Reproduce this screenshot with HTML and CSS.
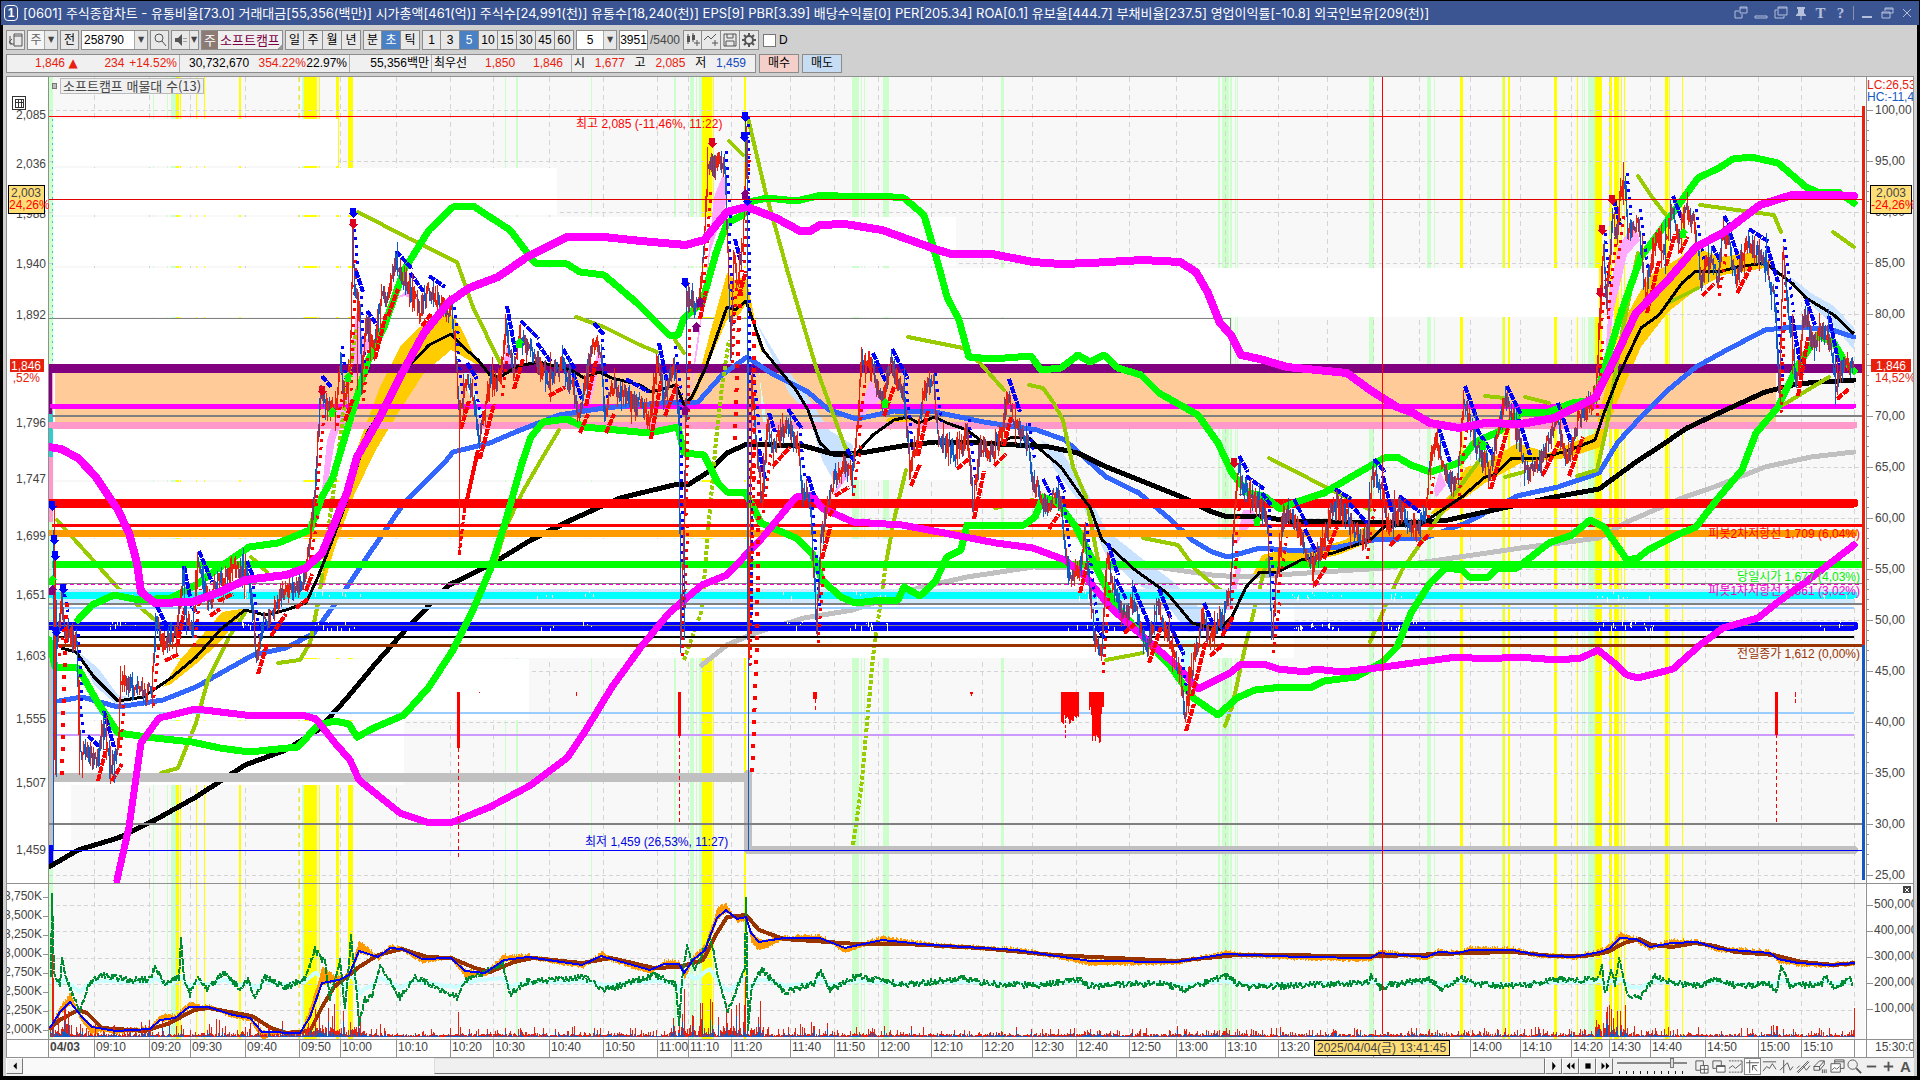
FILE: index.html
```html
<!DOCTYPE html>
<html lang="ko">

<head>
    <meta charset="UTF-8">
    <meta name="viewport" content="width=device-width, initial-scale=1.0">
    <title>[0601] 주식종합차트</title>
    <link rel="stylesheet" href="styles.css">
</head>

<body>
    <header class="titlebar">
        <span class="window-no">1</span>
        <h1>[0601] 주식종합차트 - 유통비율[73.0] 거래대금[55,356(백만)] 시가총액[461(억)] 주식수[24,991(천)] 유통수[18,240(천)] EPS[9] PBR[3.39] 배당수익률[0] PER[205.34] ROA[0.1] 유보율[444.7] 부채비율[237.5] 영업이익률[-10.8] 외국인보유[209(천)]</h1>
        <div class="window-buttons">
            <button aria-label="분리"><svg viewBox="0 0 14 14"><path d="M6 1h7v6H6zM6 2h7M5 5H1v7h7V8" /></svg></button>
            <button aria-label="숨김"><svg viewBox="0 0 14 14"><path d="M1 10h12v2H1z" /></svg></button>
            <button aria-label="복제"><svg viewBox="0 0 14 14"><path d="M4 1h9v8H4zM4 2h9M3 4H1v8h9v-2" /></svg></button>
            <button aria-label="고정"><svg viewBox="0 0 14 14"><path class="solid" d="M3 1h8v2h-1v4l2 2v1H2V9l2-2V3H3z" /><path d="M7 10v4" /></svg></button>
            <button class="glyph">T</button>
            <button class="glyph">?</button>
            <i class="divider"></i>
            <button aria-label="최소화"><svg viewBox="0 0 14 14"><path class="solid" d="M2 10h10v2H2z" /></svg></button>
            <button aria-label="복원"><svg viewBox="0 0 14 14"><path d="M5 2h8v5h-3M5 3h8M5 2v3M2 6h8v6H2zM2 7h8" /></svg></button>
            <button aria-label="닫기"><svg viewBox="0 0 14 14"><path d="M3 3l8 8M11 3l-8 8" /></svg></button>
        </div>
    </header>

    <main class="workspace">
        <div class="toolbar">
            <button class="tool" aria-label="목록"><svg viewBox="0 0 16 16"><path d="M6 2h8v12H6zM6 4h8M2 4v8M2 12h4M4 7l-3 3 3 2" /></svg></button>
            <div class="combo">
                <button class="tool light">주</button><button class="tool arrow" aria-label="종류">▼</button>
            </div>
            <button class="tool">전</button>
            <div class="combo">
                <input class="code" type="text" value="258790" aria-label="종목코드"><button class="tool arrow" aria-label="최근 종목">▼</button>
            </div>
            <button class="tool" aria-label="검색"><svg viewBox="0 0 16 16"><circle cx="7" cy="6" r="4" /><path d="M10 9l4 5" /></svg></button>
            <div class="combo">
                <button class="tool narrow" aria-label="소리"><svg viewBox="0 0 16 16"><path class="solid" d="M2 6h3l4-4v12l-4-4H2z" /><path d="M11 6v1M13 6v1M11 9v1M13 9v1" /></svg></button><button class="tool arrow thin" aria-label="소리 설정">▼</button>
            </div>
            <div class="stock"><b>주</b><span>소프트캠프</span></div>
            <div class="group">
                <button class="tool">일</button><button class="tool">주</button><button class="tool">월</button><button class="tool">년</button>
            </div>
            <div class="group">
                <button class="tool">분</button><button class="tool active">초</button><button class="tool">틱</button>
            </div>
            <div class="group">
                <button class="tool">1</button><button class="tool">3</button><button class="tool active">5</button><button class="tool">10</button><button class="tool">15</button><button class="tool">30</button><button class="tool">45</button><button class="tool">60</button>
            </div>
            <div class="combo">
                <input class="unit" type="text" value="5" aria-label="주기"><button class="tool arrow" aria-label="주기 선택">▼</button>
            </div>
            <input class="count" type="text" value="3951" aria-label="봉 개수">
            <span class="total">/5400</span>
            <div class="group">
                <button class="tool" aria-label="봉 추가"><svg viewBox="0 0 16 16"><path class="solid" d="M2 4h3v6H2zM7 3h3v5H7z" /><path d="M3 2v10M8 1v9M12 8v6M9 11h6" /></svg></button><button class="tool" aria-label="지표 추가"><svg viewBox="0 0 16 16"><path d="M1 8l4-4 3 3 5-5M12 8v6M9 11h6" /></svg></button><button class="tool" aria-label="저장"><svg viewBox="0 0 16 16"><path d="M2 2h12v12H2zM5 2v4h6V2M4 14V9h8v5" /></svg></button><button class="tool" aria-label="설정"><svg viewBox="0 0 16 16"><circle class="gear" cx="8" cy="8" r="4" /><path class="teeth" d="M8 1v3M8 12v3M1 8h3M12 8h3M3 3l2 2M11 11l2 2M13 3l-2 2M5 11l-2 2" /></svg></button>
            </div>
            <label class="check"><input type="checkbox">D</label>
        </div>

        <div class="quotebar">
            <div class="quotes">
                <div class="cell c1 up"><span>1,846 <b>▲</b></span><span>234</span><span>+14.52%</span></div>
                <div class="cell c2"><span>30,732,670</span><span class="up">354.22%</span><span>22.97%</span></div>
                <div class="cell c3"><span>55,356백만</span></div>
                <div class="cell c4"><span>최우선</span><span class="up">1,850</span><span class="up">1,846</span></div>
                <div class="cell c5"><span>시</span><span class="up">1,677</span><span>고</span><span class="up">2,085</span><span>저</span><span class="down">1,459</span></div>
            </div>
            <button class="order buy">매수</button>
            <button class="order sell">매도</button>
        </div>

        <section class="chart">
            <svg class="axis" id="priceAxis" viewBox="7 77 42 806" preserveAspectRatio="none"></svg>
            <div class="plot">
                <svg id="pricePlot" viewBox="49 77 1816 806" preserveAspectRatio="none"></svg>
                <div class="legend"><i></i><span>소프트캠프 매물대 수(13)</span></div>
            </div>
            <svg class="axis" id="rateAxis" viewBox="1865 77 48 806" preserveAspectRatio="none"></svg>

            <svg class="axis lower" id="volumeAxis" viewBox="7 884 42 155" preserveAspectRatio="none"></svg>
            <svg class="plot lower" id="volumePlot" viewBox="49 884 1816 155" preserveAspectRatio="none"></svg>
            <svg class="axis lower" id="amountAxis" viewBox="1865 884 48 155" preserveAspectRatio="none"></svg>

            <svg class="time" id="timeAxis" viewBox="7 1040 1906 17" preserveAspectRatio="none"></svg>
        </section>

        <footer class="bottombar">
            <button class="step" aria-label="왼쪽"><svg viewBox="0 0 16 16"><path class="solid" d="M10 4v8L6 8z" /></svg></button>
            <div class="track"><div class="thumb"></div></div>
            <button class="step" aria-label="재생"><svg viewBox="0 0 16 16"><path class="solid" d="M6 3v10l4-5z" /></svg></button>
            <button class="step" aria-label="뒤로"><svg viewBox="0 0 16 16"><path class="solid" d="M7 4v8L3 8zM12 4v8L8 8z" /></svg></button>
            <button class="step" aria-label="정지"><svg viewBox="0 0 16 16"><path class="solid" d="M5 5h6v6H5z" /></svg></button>
            <button class="step" aria-label="앞으로"><svg viewBox="0 0 16 16"><path class="solid" d="M4 4v8l4-4zM9 4v8l4-4z" /></svg></button>
            <input class="speed" type="range" min="0" max="10" value="8" aria-label="속도">
            <div class="icons">
                <button aria-label="창 추가"><svg viewBox="0 0 16 16"><path d="M2 2h8v10H2z" /><path class="white" d="M7 7h8v8H7z" /><path d="M11 7v8M7 11h8" /></svg></button>
                <button aria-label="창 복사"><svg viewBox="0 0 16 16"><path d="M2 2h9v8H2z" /><path class="white" d="M6 7h9v7H6z" /><path d="M6 8h9" /></svg></button>
                <button aria-label="추세 영역"><svg viewBox="0 0 16 16"><path stroke-dasharray="2 1" d="M1 2h14M1 14h14" /><path d="M1 10l4-3 3 3 6-5M15 2v12" /></svg></button>
                <button class="pressed" aria-label="십자선"><svg viewBox="0 0 16 16"><path d="M1 4h14M5 1v14M8 7l5 6M8 12V7h5" /></svg></button>
                <button aria-label="수평선"><svg viewBox="0 0 16 16"><path d="M1 3h14M1 13l4-5 3 2 3-5 4 6" /></svg></button>
                <button aria-label="수직선"><svg viewBox="0 0 16 16"><path d="M5 1v14M1 12l4-4 4-4 3 8 3-4" /></svg></button>
                <button aria-label="추세선"><svg viewBox="0 0 16 16"><path d="M1 14L13 2M2 15L14 3M8 8l3 4 4-5M1 10l3-3" /></svg></button>
                <button aria-label="지우기"><svg viewBox="0 0 16 16"><path d="M1 8l6-6h5l-5 6zM1 8v4h6V8M7 12l5-6V2M10 11v4M12 11v4M14 11v4" /></svg></button>
                <button aria-label="겹치기"><svg viewBox="0 0 16 16"><path d="M5 1h10v9H5zM5 3h10" /><path class="white" d="M1 5h10v9H1z" /><path d="M2 12l3-3 2 2 3-3" /></svg></button>
                <button aria-label="확대경"><svg viewBox="0 0 16 16"><circle cx="6" cy="6" r="5" /><path stroke-width="2" d="M10 10l5 5" /></svg></button>
                <button aria-label="축소"><svg viewBox="0 0 16 16"><path stroke-width="2" d="M3 8h10" /></svg></button>
                <button aria-label="확대"><svg viewBox="0 0 16 16"><path stroke-width="2" d="M3 8h10M8 3v10" /></svg></button>
                <button class="letter">A</button>
            </div>
        </footer>
    </main>

    <script src="chart.js"></script>
</body>

</html>
```
FILE: styles.css
```css
* {
    box-sizing: border-box;
}

body {
    margin: 0;
    padding: 1px 1px 4px;
    height: 100vh;
    display: flex;
    flex-direction: column;
    background: #000;
    color: #000;
    font-family: "Liberation Sans", "Noto Sans CJK KR", sans-serif;
    font-size: 12px;
    overflow: hidden;
}

button,
input {
    font: inherit;
    color: inherit;
    margin: 0;
    padding: 0;
    border: 0;
    background: none;
}

button svg {
    width: 16px;
    height: 16px;
    display: block;
    margin: auto;
    fill: none;
    stroke: #555;
}

svg .solid {
    fill: #555;
    stroke: none;
}

svg .gear,
svg .teeth {
    stroke-width: 2;
}

/* title */
.titlebar {
    flex: none;
    display: flex;
    align-items: center;
    height: 24px;
    padding: 0 5px 0 3px;
    background: #3a5592;
    color: #fff;
}

.window-no {
    width: 14px;
    height: 16px;
    margin-right: 5px;
    border: 1px solid #fff;
    border-radius: 4px;
    font: bold 12px/14px "Liberation Sans", sans-serif;
    text-align: center;
}

.titlebar h1 {
    flex: 1;
    margin: 0;
    font: 13px/20px Inter, "Noto Sans CJK KR", sans-serif;
    white-space: nowrap;
}

.window-buttons {
    display: flex;
    align-items: center;
    gap: 5px;
    color: #b4c0dc;
}

.window-buttons button {
    width: 15px;
    height: 16px;
}

.window-buttons svg {
    width: 14px;
    height: 14px;
    stroke: #b4c0dc;
}

.window-buttons .solid {
    fill: #b4c0dc;
}

.window-buttons .glyph {
    font: bold 15px/16px "Liberation Serif", serif;
}

.divider {
    width: 1px;
    height: 14px;
    background: #8a93a5;
}

.workspace {
    flex: 1;
    min-height: 0;
    margin: 0 2px;
    display: flex;
    flex-direction: column;
    background: #d0d0d0;
}

/* toolbar */
.toolbar {
    display: flex;
    align-items: flex-start;
    gap: 2px;
    height: 26px;
    padding: 5px 3px 0;
}

.combo,
.group {
    flex: none;
    display: flex;
    height: 20px;
}

.combo {
    border: 1px solid #8c8c8c;
}

.combo .tool {
    height: 18px;
    border: 0;
}

.combo .tool.arrow {
    border-left: 1px solid #aaa;
}

.group .tool + .tool {
    border-left: 0;
}

.tool {
    flex: none;
    width: 19px;
    height: 20px;
    border: 1px solid #8c8c8c;
    background: #e8e8e8;
    line-height: 18px;
    text-align: center;
}

.tool.narrow {
    width: 17px;
}

.tool.light {
    width: 16px;
    background: #f6f6f6;
    color: #666;
}

.tool.arrow {
    width: 13px;
    font: 8px/18px "DejaVu Sans", sans-serif;
    color: #444;
}

.tool.arrow.thin {
    width: 9px;
}

.tool.active {
    background: #4a80c4;
    color: #fff;
}

.code,
.unit,
.count {
    height: 18px;
    background: #fff;
}

.code {
    width: 52px;
    padding-left: 2px;
}

.unit {
    width: 26px;
    text-align: center;
}

.count {
    width: 29px;
    height: 20px;
    border: 1px solid #8c8c8c;
    text-align: center;
}

.total {
    width: 31px;
    line-height: 20px;
    color: #444;
}

.stock {
    display: flex;
    align-items: center;
    width: 82px;
    height: 20px;
    gap: 2px;
    border: 1px solid #8c8c8c;
    background: linear-gradient(135deg, #efefef 95%, #999 95%);
    color: #7a0045;
    font: 13px/18px "Noto Sans CJK KR", sans-serif;
    white-space: nowrap;
}

.stock b {
    width: 16px;
    height: 18px;
    background: #8c7b74;
    color: #fff;
    font-weight: normal;
    text-align: center;
}

.check {
    display: flex;
    align-items: center;
    gap: 3px;
    height: 20px;
    margin-left: 2px;
}

.check input {
    appearance: none;
    width: 13px;
    height: 13px;
    border: 1px solid #777;
    background: #fff;
}

/* quotes */
.quotebar {
    display: flex;
    gap: 3px;
    padding: 3px 3px;
}

.quotes {
    display: flex;
    width: 750px;
    height: 19px;
    border: 1px solid #8c8c8c;
    background: #f0f0f0;
    line-height: 17px;
}

.cell {
    flex: none;
    display: flex;
    justify-content: space-between;
    padding: 0 2px;
    white-space: nowrap;
}

.cell b {
    font: 12px/17px "DejaVu Sans", sans-serif;
}

.cell + .cell {
    border-left: 1px solid #b0b0b0;
}

.c1 {
    width: 172px;
    padding-left: 28px;
}

.c1 span:nth-child(2) {
    margin-left: 22px;
}

.c2 {
    width: 170px;
    padding-left: 9px;
}

.c2 span:nth-child(2) {
    margin-left: 9px;
}

.c3 {
    width: 82px;
    justify-content: flex-end;
}

.c4 {
    width: 140px;
    padding-right: 8px;
}

.c5 {
    flex: 1;
    padding-right: 9px;
}

.up {
    color: #e8200e;
}

.down {
    color: #1448c0;
}

.order {
    width: 40px;
    height: 19px;
    border: 1px solid #8c8c8c;
    line-height: 17px;
}

.buy {
    background: #f5cfca;
}

.sell {
    background: #c6ddf3;
}

/* chart */
.chart {
    flex: 1;
    min-height: 0;
    margin: 0 3px;
    display: grid;
    grid-template-columns: 42px minmax(0, 1fr) 48px;
    grid-template-rows: minmax(0, 806fr) minmax(0, 156fr) 18px;
    border: 1px solid #909090;
    border-bottom: 0;
    background: #fff;
}

.chart svg {
    display: block;
    width: 100%;
    height: 100%;
    overflow: hidden;
}

.chart svg * {
    shape-rendering: crispEdges;
}

.chart text {
    font-size: 12px;
    fill: #444;
}

.plot {
    position: relative;
    min-width: 0;
    min-height: 0;
    background: #f8f8f8;
}

.chart .lower,
.chart .time {
    border-top: 1px solid #909090;
}

.time {
    grid-column: 1 / -1;
}

.legend {
    position: absolute;
    top: 1px;
    left: 3px;
    display: flex;
    align-items: center;
    gap: 3px;
    font: 13px/14px "Noto Sans CJK KR", sans-serif;
    color: #444;
}

.legend i {
    width: 5px;
    height: 6px;
    border: 1px solid #777;
    background: #bbb;
}

.legend span {
    padding: 0 2px;
    border: 1px solid #bbb;
    background: #f0f0f0;
}

.chart .bold {
    font-weight: bold;
}

.chart .red {
    fill: #f00;
}

.chart .hot {
    fill: #e8200e;
}

.chart .blue {
    fill: #0000e0;
}

.chart .sky {
    fill: #1259c3;
}

.chart .lime {
    fill: #00f000;
}

.chart .pink {
    fill: #f000d0;
}

.chart .brown {
    fill: #993300;
}

.chart .white {
    fill: #fff;
}

/* bottom bar */
.bottombar {
    flex: none;
    display: flex;
    align-items: center;
    height: 19px;
    margin: 0 3px;
    padding-bottom: 2px;
    background: #f0f0f0;
    border-top: 1px solid #909090;
}

.step {
    flex: none;
    width: 17px;
    height: 16px;
    border: 1px solid;
    border-color: #fff #777 #777 #fff;
    background: #f0f0f0;
}

.step .solid {
    fill: #000;
}

.step svg {
    height: 14px;
}

.track {
    flex: 1;
    height: 16px;
    display: flex;
    justify-content: flex-end;
    background: #f9f9f9;
}

.thumb {
    width: 73%;
    border: 1px solid;
    border-color: #ddd #777 #777 #ddd;
    background: #f0f0f0;
}

.speed {
    appearance: none;
    width: 70px;
    height: 16px;
    margin: 0 6px 0 4px;
    background: linear-gradient(#888, #888) 0 4px / 100% 2px no-repeat,
        repeating-linear-gradient(90deg, #222 0 1px, transparent 1px 7px) 2px 13px / 100% 3px no-repeat;
}

.speed::-webkit-slider-thumb {
    appearance: none;
    width: 4px;
    height: 10px;
    margin-bottom: 6px;
    border: 1px solid #777;
    background: #ddd;
}

.icons {
    display: flex;
}

.icons button {
    width: 17px;
    height: 17px;
}

.icons svg {
    width: 15px;
    height: 15px;
}

.icons .pressed {
    background: #fff;
    border: 1px solid #888;
}

.icons svg .white {
    fill: #fff;
}

.icons .letter {
    font: bold 15px/17px "Liberation Sans", sans-serif;
    color: #555;
}
```
FILE: chart.js
```js
var NS = 'http://www.w3.org/2000/svg';

function el(parent, tag, attrs, content) {
    var node = document.createElementNS(NS, tag);
    for (var key in attrs) node.setAttribute(key, attrs[key]);
    if (content) node.textContent = content;
    parent.appendChild(node);
    return node;
}

function rect(p, x, y, w, h, fill) {
    return el(p, 'rect', { x: x, y: y, width: w, height: h, fill: fill });
}

function line(p, points, color, width, dash, cap) {
    return el(p, 'polyline', {
        points: points, fill: 'none', stroke: color, 'stroke-width': width,
        'stroke-linejoin': 'round', 'stroke-linecap': cap || 'butt', 'stroke-dasharray': dash || 'none'
    });
}

function area(p, points, color) {
    return el(p, 'polygon', { points: points, fill: color });
}

function text(p, x, y, str, cls, anchor) {
    return el(p, 'text', { x: x, y: y, 'class': cls || '', 'text-anchor': anchor || 'start' }, str);
}

function pairs(str) {
    return str.trim().split(/\s+/).map(function (s) { return s.split(',').map(Number); });
}

// fixed seed so every load draws the same candles
var seed = 7;
function rnd() {
    seed = (seed * 16807) % 2147483647;
    return seed / 2147483647;
}

function valueAt(pts, x) {
    for (var i = 1; i < pts.length; i++) {
        if (x <= pts[i][0]) {
            var a = pts[i - 1], b = pts[i];
            return a[1] + (b[1] - a[1]) * (x - a[0]) / ((b[0] - a[0]) || 1);
        }
    }
    return pts[pts.length - 1][1];
}

var ticks = [94, 149, 190, 245, 299, 340, 396, 450, 493, 549, 603, 657, 688, 731, 790, 834, 878, 931, 982,
    1032, 1076, 1129, 1176, 1225, 1278, 1327, 1373, 1419, 1470, 1520, 1571, 1609, 1650, 1705, 1758, 1801, 1854];
var tickLabels = ['09:10', '09:20', '09:30', '09:40', '09:50', '10:00', '10:10', '10:20', '10:30', '10:40', '10:50',
    '11:00', '11:10', '11:20', '11:40', '11:50', '12:00', '12:10', '12:20', '12:30', '12:40', '12:50', '13:00',
    '13:10', '13:20', '', '', '', '14:00', '14:10', '14:20', '14:30', '14:40', '14:50', '15:00', '15:10', ''];

// x, width of the signal stripes
var greenBars = '49,4 153,1 167,1 171,5 302,2 505,1 516,2 591,1 674,2 690,4 696,1 699,3 852,7 861,1 864,1 883,6 1001,3 1218,2 1222,7 1230,2 1235,1 1237,1 1369,5 1427,4 1434,1 1502,1 1582,1 1584,1 1588,7';
var yellowBars = '176,3 180,1 196,1 204,1 239,2 304,13 319,1 336,3 348,5 702,10 713,1 744,2 1460,3 1503,2 1508,2 1554,3 1577,1 1595,7 1609,3 1614,5 1621,1 1624,1 1665,3 1669,1 1682,1';

function stripes(p, y, h) {
    pairs(greenBars).forEach(function (b) { rect(p, b[0], y, b[1], h, '#ccffcc'); });
    pairs(yellowBars).forEach(function (b) { rect(p, b[0], y, b[1], h, '#ffff00'); });
    ticks.forEach(function (x) { line(p, x + ',' + y + ' ' + x + ',' + (y + h), '#d4d4d4', 1, '5 4'); });
    line(p, '298,' + y + ' 298,' + (y + h), '#ffff00', 1, '5 4');
}

/* ---------- price plot ---------- */
var P = document.getElementById('pricePlot');
stripes(P, 77, 806);
for (var g = 0; g < 16; g++) line(P, '49,' + (110 + g * 51) + ' 1862,' + (110 + g * 51), '#d4d4d4', 1, '4 3');

// volume profile: top, bottom, right edge
[[119, 166, 338], [168, 215, 557], [217, 266, 956], [268, 317, 1599], [318, 365, 1230], [365, 422, 1230], [424, 480, 985],
    [482, 538, 841], [539, 596, 1341], [597, 658, 1294], [659, 720, 529], [721, 785, 404], [785, 851, 71]].forEach(function (r) {
    rect(P, 54, r[0], r[2] - 54, r[1] - r[0], '#ffffff');
});
line(P, '49,318 1230,318 1230,365', '#808080', 1);

rect(P, 55, 373, 1721, 49, '#ffcc99');
rect(P, 49, 372, 4, 150, '#ff99cc');
rect(P, 49, 411, 4, 46, '#33cccc');
rect(P, 49, 364, 3, 50, '#800080');
rect(P, 49, 640, 5, 225, '#c0c0c0');
rect(P, 49, 845, 4, 22, '#0000ff');
line(P, '52,119 52,365', '#33cccc', 1, '2 4');

// y, width, colour, round end
var bands = [[368, 9, '#800080'], [425, 7, '#ff99cc', 1], [406, 5, '#ff00ff', 1]];
function drawBand(b) {
    line(P, '52,' + b[0] + ' ' + (b[3] ? 1854 : 1862) + ',' + b[0], b[2], b[1], '', b[3] ? 'round' : 'butt');
}

// moving average clouds
area(P, '76,650 98,668 118,695 135,698 118,706 94,685', '#c8e2ff');
area(P, '755,320 780,362 800,385 815,408 829,430 853,445 850,470 833,480 822,460 808,413 790,395', '#c8e2ff');
area(P, '1041,440 1061,450 1086,490 1106,530 1140,557 1171,580 1200,608 1212,630 1188,632 1163,600 1131,580 1106,555 1082,505 1055,470', '#c8e2ff');
area(P, '1788,275 1811,293 1834,306 1854,328 1854,350 1834,326 1806,300', '#c8e2ff');
area(P, '163,687 180,660 204,633 222,612 247,608 220,642 196,664 171,684', '#ffcc00');
area(P, '322,575 331,527 345,498 359,443 380,387 400,347 416,330 433,317 449,311 461,328 473,353 494,382 478,365 451,350 424,373 400,410 376,450 355,493 335,547 324,585', '#ffcc00');
area(P, '692,403 710,333 727,273 735,280 746,277 755,320 763,357 746,304 739,315 727,320 714,350 702,380', '#ffcc00');
area(P, '886,420 902,410 912,420 890,430', '#ffcc00');
area(P, '1250,580 1262,555 1290,548 1310,550 1345,540 1375,520 1375,540 1338,555 1301,563 1265,577', '#ffcc00');
area(P, '1430,513 1452,493 1466,467 1485,463 1517,443 1549,453 1595,433 1610,370 1624,320 1641,290 1654,272 1668,265 1696,247 1719,257 1750,253 1772,262 1765,268 1723,275 1696,290 1668,312 1641,347 1618,400 1600,447 1567,458 1521,463 1485,483 1462,500 1439,517', '#ffcc00');
['322,490 327,440 339,407 347,387 351,400 335,440 326,495', '351,347 357,310 363,337 375,343 367,350 355,380',
    '688,407 696,347 706,280 714,197 724,172 727,200 710,253 698,347', '857,425 863,400 871,378 880,400 868,410',
    '1604,373 1610,290 1618,247 1634,223 1640,240 1627,255 1613,313 1607,367', '500,380 508,340 512,370',
    '833,495 845,470 853,470 838,490', '1236,545 1243,510 1253,510 1258,520 1246,530',
    '1434,490 1440,470 1446,485 1436,498', '1226,610 1238,560 1242,565 1232,610', '394,300 408,290 418,300 404,296',
    '586,400 598,350 601,360 590,405'].forEach(function (a) {
    area(P, a, '#ffaaff');
});
['755,310 764,440 771,450 760,380', '461,375 480,420 486,410 478,400 468,372', '1093,620 1101,630 1106,580 1098,600',
    '816,560 822,530 826,540 819,585', '1180,640 1186,690 1192,665 1198,640'].forEach(function (a) {
    area(P, a, '#ccffff');
});

bands.forEach(drawBand);
line(P, '52,416 1862,416', '#808080', 2);

// slow averages
line(P, '702,665 727,645 755,633 804,618 853,610 918,588 967,577 1033,567 1163,568 1212,575 1240,577 1292,574 1384,568 1439,560 1521,548 1599,538 1627,522 1682,498 1714,487 1765,467 1811,457 1854,452', '#c0c0c0', 5, '', 'round');
line(P, '59,701 82,697 118,707 163,700 196,687 253,655 286,648 314,633 347,587 367,557 404,503 445,462 453,452 490,443 518,431 559,415 604,408 661,403 698,402 722,375 747,357 771,373 808,392 829,410 857,419 894,411 935,412 984,422 1037,430 1065,440 1106,477 1139,493 1171,520 1192,540 1212,552 1228,557 1260,548 1301,551 1338,547 1374,540 1425,538 1466,523 1517,496 1558,487 1599,473 1618,442 1641,417 1668,390 1696,367 1723,352 1765,330 1792,327 1829,329 1854,337', '#3366ff', 5, '', 'round');
line(P, '49,867 78,850 118,838 155,820 196,797 245,765 286,750 318,730 347,698 376,663 408,627 449,585 490,565 531,540 571,520 620,498 678,484 688,485 708,472 727,453 747,444 804,446 833,454 861,453 902,446 935,442 984,443 1049,447 1078,453 1102,465 1184,498 1212,512 1228,517 1260,516 1287,521 1333,522 1420,522 1448,520 1494,510 1549,498 1599,489 1636,462 1659,447 1687,428 1719,413 1765,392 1797,384 1820,382 1854,380', '#000', 5, '', 'round');

// parabolic trails
['358,212 408,238 457,262 473,307 500,363', '576,317 604,327 640,345 657,352', '57,520 118,588 155,620',
    '161,773 178,768 196,723 208,680 229,637 245,613', '251,557 267,572', '278,663 300,660 310,643 318,603 322,577',
    '496,560 506,527 522,493 541,460 559,430', '729,141 743,155', '748,118 765,190 788,273 816,367 845,447 853,457',
    '675,340 684,353', '908,337 963,348 980,363 1004,390', '1029,385 1043,388 1053,402 1063,420 1073,467 1086,497 1098,560',
    '1143,538 1178,545 1196,570 1224,593', '1106,660 1143,653', '1225,726 1232,707 1246,643 1260,587 1267,560',
    '1269,458 1347,498 1370,510', '1370,642 1388,600 1402,570 1425,537 1450,500 1485,453', '1485,396 1505,398',
    '1525,397 1549,403', '1505,477 1524,472', '1577,476 1597,470 1606,430 1622,333 1638,253', '1638,176 1652,197 1666,215',
    '1700,205 1774,215 1781,232', '1833,232 1854,247', '1668,303 1698,288', '1783,405 1829,377',
    '886,563 894,520 906,470', '995,508 1033,500'].forEach(function (s) {
    line(P, s, '#99cc00', 4, '', 'round');
});
['684,660 702,610 707,543 712,487 716,440 722,387 729,340', '853,845 861,790 873,657 886,563', '322,577 335,480 345,400 357,327'].forEach(function (s) {
    line(P, s, '#99cc00', 4, '4 2');
});

// horizontal levels
line(P, '49,116 1862,116', '#ff0000', 1);
[[503, 9, '#ff0000', 1], [525, 3, '#ff0000'], [533, 7, '#ff9900', 1]].forEach(drawBand);
rect(P, 52, 589, 1802, 15, '#d0e8ff');
[[595, 7, '#00ffff', 1], [626, 9, '#0000ff', 1]].forEach(drawBand);
line(P, '49,583 1862,583', '#808080', 1);
line(P, '49,584 1862,584', '#ff00cc', 1, '4 3');
line(P, '49,604 1862,604', '#808080', 2);
line(P, '49,608 1854,608', '#99ccff', 2);
line(P, '49,625 1854,625', '#808080', 1);
line(P, '54,637 1854,637', '#000', 2);
line(P, '49,645 1862,645', '#993300', 3);
line(P, '52,713 1854,713', '#99ccff', 2);
line(P, '52,735 1854,735', '#cc99ff', 2);
line(P, '54,777 747,777', '#c0c0c0', 9);
line(P, '748,774 748,850 1854,850', '#c0c0c0', 8, '', 'round');
line(P, '49,824 1862,824', '#808080', 2);
line(P, '49,850 1862,850', '#0000ff', 1);
for (var n = 0; n < 700; n++) {
    var sx = 110 + Math.floor(rnd() * 1740);
    if (Math.sin(sx / 17) + Math.sin(sx / 41) > 0.6) {
        rect(P, sx, (n % 2 ? 591 : 622) + Math.floor(rnd() * 7), 1, 1 + Math.floor(rnd() * 5), '#fff');
    }
}
line(P, '52,564 1862,564', '#00ff00', 7);

// envelopes
line(P, '78,620 92,605 114,595 139,600 171,598 196,585 220,567 249,547 278,543 310,530 322,497 333,477 351,417 367,363 384,327 404,270 429,230 453,207 473,206 510,230 535,263 567,264 580,272 604,275 637,303 669,335 678,335 684,318 702,303 716,253 727,223 743,215 749,202 767,198 796,201 822,195 853,197 882,196 904,198 924,215 939,267 947,297 959,320 969,357 992,359 1031,356 1041,370 1061,368 1078,355 1090,362 1104,355 1118,368 1141,375 1159,393 1198,415 1218,443 1232,473 1248,493 1264,496 1280,509 1296,502 1324,493 1351,477 1372,465 1384,458 1397,457 1411,465 1430,472 1459,463 1475,442 1498,432 1521,413 1549,412 1572,403 1595,400 1604,370 1622,310 1641,257 1659,233 1677,207 1698,178 1719,168 1733,159 1751,157 1778,163 1806,187 1820,193 1838,192 1854,203', '#00ff00', 7, '', 'round');
line(P, '49,640 55,667 78,668 98,703 118,733 155,738 192,742 220,748 249,752 298,747 318,725 335,721 349,724 357,737 376,727 404,715 429,687 453,650 473,610 490,570 506,520 522,463 531,437 543,422 567,419 584,427 649,433 678,427 684,453 704,455 718,483 727,492 745,492 753,507 761,523 796,538 812,553 822,580 841,597 855,603 882,600 898,600 904,587 920,596 935,582 947,557 961,550 967,525 1024,525 1035,517 1043,497 1057,502 1076,527 1094,563 1114,603 1143,637 1171,667 1192,697 1218,715 1237,698 1255,690 1283,687 1310,688 1324,681 1356,677 1381,663 1397,647 1411,613 1430,583 1446,568 1462,570 1469,577 1487,578 1498,568 1517,568 1549,543 1572,535 1590,520 1604,527 1627,560 1638,558 1648,550 1677,535 1696,527 1719,497 1742,470 1756,433 1778,407 1797,367 1818,335 1834,343 1845,362 1854,371', '#00ff00', 7, '', 'round');
line(P, '61,648 76,652 94,677 118,701 143,697 171,678 196,657 220,630 245,610 265,615 286,610 306,603 318,577 335,533 347,500 367,433 388,400 408,367 429,345 451,334 461,345 478,360 490,375 500,377 518,366 539,362 555,366 571,370 584,378 599,372 612,378 640,385 651,392 676,385 684,405 692,397 706,367 727,307 735,310 746,301 755,327 763,350 796,390 808,410 820,443 833,455 853,457 873,435 894,420 908,417 918,423 935,417 947,423 967,430 984,443 1000,443 1012,437 1029,438 1041,450 1061,467 1082,497 1090,507 1102,540 1135,570 1167,593 1192,623 1218,630 1232,617 1246,587 1260,572 1278,572 1301,560 1333,553 1370,540 1384,527 1402,525 1420,525 1439,512 1462,497 1485,477 1494,475 1512,458 1540,458 1567,451 1595,440 1604,413 1618,377 1641,328 1659,315 1682,283 1696,271 1719,272 1737,267 1765,263 1792,283 1806,298 1834,315 1854,334', '#000', 3);
line(P, '117,880 129,827 141,743 159,718 196,709 245,715 302,715 316,719 335,743 350,760 359,780 380,797 400,813 429,823 453,822 490,807 531,785 567,758 584,733 612,687 641,647 669,613 702,585 727,575 743,558 763,537 796,497 812,495 822,508 853,522 902,525 939,532 996,543 1033,548 1065,560 1086,577 1110,607 1147,640 1176,665 1198,689 1220,678 1230,673 1241,664 1264,664 1278,669 1306,672 1315,669 1342,672 1384,667 1420,662 1457,657 1487,659 1517,657 1558,660 1581,658 1598,650 1613,662 1627,675 1638,678 1673,669 1700,645 1723,628 1758,618 1778,602 1811,578 1854,545', '#ff00ff', 7, '', 'round');

// candles follow this path of closes
var closes = pairs('57,640 61,600 64,630 76,640 78,720 80,755 86,750 96,765 102,725 110,765 118,740 120,680 135,690 151,690 155,620 163,645 175,630 182,580 186,615 192,630 197,565 208,600 216,585 229,570 245,575 251,600 256,658 263,620 269,620 282,590 294,592 304,575 308,550 314,490 320,390 327,405 335,410 340,360 343,405 349,375 352,235 354,285 359,310 361,385 365,325 373,343 382,290 386,300 394,265 408,287 420,310 427,290 441,305 451,313 455,357 459,413 465,377 473,397 478,443 490,380 500,380 505,320 512,373 519,335 535,357 547,380 561,363 571,387 578,417 584,390 592,337 600,353 604,417 610,390 624,393 645,410 649,423 657,357 663,400 673,360 678,413 680,640 684,500 686,300 698,303 702,267 707,167 712,165 724,165 727,247 730,347 733,253 737,280 742,247 745,163 746,130 748,650 751,380 757,463 761,497 767,427 771,450 786,423 798,447 801,497 806,490 810,513 816,627 820,543 827,500 833,480 845,463 851,480 857,420 861,357 871,367 882,400 890,363 904,397 909,470 916,440 924,387 933,387 938,440 955,453 967,433 972,503 980,447 992,450 1002,430 1007,393 1016,430 1027,437 1031,480 1041,493 1047,513 1055,490 1061,510 1066,570 1078,577 1084,537 1094,640 1101,657 1106,557 1114,593 1122,617 1131,600 1147,647 1157,603 1167,637 1180,673 1184,715 1190,680 1202,617 1208,640 1220,620 1229,593 1233,527 1237,470 1244,490 1260,507 1267,523 1271,637 1276,577 1283,513 1292,513 1303,543 1312,570 1322,543 1333,503 1347,517 1365,543 1372,473 1381,490 1388,530 1397,510 1416,530 1425,510 1430,453 1436,440 1446,480 1457,480 1463,400 1475,443 1489,473 1505,400 1517,433 1526,473 1540,460 1556,417 1567,460 1579,413 1595,400 1599,313 1603,247 1606,303 1612,213 1616,243 1620,190 1625,187 1627,233 1638,223 1645,297 1655,237 1664,250 1671,210 1678,237 1684,213 1694,223 1700,280 1710,260 1717,280 1722,230 1728,247 1735,277 1747,243 1765,260 1774,300 1779,397 1782,253 1790,330 1796,380 1804,313 1811,343 1827,330 1835,383 1845,365 1854,368');

// stop marks: solid on gentle legs, dotted on steep ones
for (var i = 1; i < closes.length; i++) {
    var a = closes[i - 1], b = closes[i];
    var rise = b[1] - a[1];
    if (Math.abs(rise) < 14) continue;
    var steep = Math.abs(rise) / (b[0] - a[0]) > 9;
    var pts = rise > 0
        ? (a[0] + 2) + ',' + (a[1] - 14) + ' ' + (b[0] + 4) + ',' + (b[1] - 18)
        : (a[0] + 2) + ',' + (a[1] + 16) + ' ' + (b[0] + 4) + ',' + (b[1] + 24);
    line(P, pts, rise > 0 ? '#0000ff' : '#ff0000', steep ? 3 : 4, steep ? '3 5' : '7 1');
}

var redPath = '', bluePath = '';
var prev = closes[0][1], x;
for (x = 57; x < 1854; x++) {
    var mid = valueAt(closes, x) + (rnd() - 0.5) * 14;
    var wick = rnd() < 0.12 ? 22 : 10;
    var high = Math.min(prev, mid) - rnd() * wick;
    var low = Math.max(prev, mid) + rnd() * wick;
    var seg = 'M' + x + '.5 ' + high.toFixed(0) + 'V' + low.toFixed(0);
    if (mid < prev ? rnd() < 0.8 : rnd() < 0.35) redPath += seg; else bluePath += seg;
    prev = mid;
}
// the opening plunge, and the stray wicks
redPath += 'M54.500 500V760M55.500 560V775M79.500 680V775M459.500 400V555M357.500 300V390';
bluePath += 'M53.500 530V850M56.500 600V777M745.500 115V200M748.500 350V850M747.500 300V640M684.500 470V640';
el(P, 'path', { d: bluePath, stroke: '#1259c3', fill: 'none' });
el(P, 'path', { d: redPath, stroke: '#e8200e', fill: 'none' });
['754,320 754,480', '759,480 757,640 752,780', '735,440 738,340 742,270', '62,775 64,690 67,600'].forEach(function (s) {
    line(P, s, '#ff0000', 4, '4 8');
});
line(P, '467,500 478,450', '#ff0000', 4);
line(P, '459,555 466,500', '#ff0000', 3, '5 2');

line(P, '49,447 61,449 78,458 96,477 110,498 118,510 129,533 137,563 141,592 155,603 192,602 220,592 245,580 286,575 306,568 322,553 333,527 347,493 357,457 380,417 400,377 424,333 449,302 469,288 498,277 527,257 567,237 604,237 641,241 686,245 704,240 727,212 747,207 776,218 800,231 810,231 820,225 845,224 882,230 935,249 951,254 992,254 1033,262 1061,264 1090,263 1143,260 1180,262 1196,272 1208,293 1220,323 1231,335 1241,355 1260,359 1287,367 1347,373 1370,390 1397,407 1413,413 1430,423 1459,428 1485,423 1521,424 1554,418 1595,398 1613,362 1636,313 1668,280 1696,247 1723,233 1760,205 1792,195 1829,195 1854,196', '#ff00ff', 8, '', 'round');

// selling pressure under the levels
[[458, 3, 168], [679, 3, 133], [815, 4, 20], [971, 3, 5], [1776, 3, 130], [1795, 1, 14], [576, 1, 4], [479, 1, 1]].forEach(function (s) {
    line(P, s[0] + ',692 ' + s[0] + ',' + (692 + s[2]), '#ff0000', 1, '4 3');
    rect(P, s[0] - s[1] / 2, 692, s[1], s[2] / 3, '#ff0000');
});
for (x = 1061; x < 1079; x++) rect(P, x, 692, 1, 26 - Math.abs(x - 1068) + rnd() * 12, '#ff0000');
for (x = 1089; x < 1104; x++) rect(P, x, 692, 1, (x < 1092 || x > 1100 ? 14 : 42) + rnd() * 10, '#ff0000');
line(P, '1065,720 1065,740', '#ff0000', 1, '3 2');

function marker(x, y, color, up) {
    var s = up ? -1 : 1;
    area(P, [[-3, -5], [3, -5], [3, 0], [5, 0], [0, 5], [-5, 0], [-3, 0]].map(function (q) {
        return (x + q[0]) + ',' + (y + q[1] * s);
    }).join(' '), color);
}
pairs('745,117 744,137 747,201 685,283 353,213 52,506 54,540 55,556 63,589 56,632').forEach(function (m) { marker(m[0], m[1], '#0000ff'); });
pairs('712,143 353,224 322,391 1612,200 1602,230 1600,293 1234,463').forEach(function (m) { marker(m[0], m[1], '#dd0022'); });
pairs('348,377 332,412 519,343 885,403 1257,521 1683,233 1483,445 52,580').forEach(function (m) { marker(m[0], m[1], '#00ff00', true); });
pairs('745,194 700,302 696,327 685,410 52,590').forEach(function (m) { marker(m[0], m[1], '#800080', true); });

// crosshair and range marker
line(P, '49,199.500 1862,199.500', '#e00000', 1);
line(P, '1382.500,77 1382.500,883', '#ff0000', 1);
rect(P, 1862, 106, 3, 539, '#e8200e');
rect(P, 1862, 645, 3, 235, '#1259c3');

text(P, 576, 128, '최고 2,085 (-11,46%, 11:22)', 'red');
text(P, 585, 846, '최저 1,459 (26,53%, 11:27)', 'blue');
text(P, 1860, 538, '피봇2차저항선 1,709 (6,04%)', 'red', 'end');
text(P, 1860, 581, '당일시가 1,677 (4,03%)', 'lime', 'end');
text(P, 1860, 595, '피봇1차저항선 1,661 (3,02%)', 'pink', 'end');
text(P, 1860, 658, '전일종가 1,612 (0,00%)', 'brown', 'end');

/* ---------- price axes ---------- */
var L = document.getElementById('priceAxis');
[['2,085', 119], ['2,036', 168], ['1,988', 218], ['1,940', 268], ['1,892', 319], ['1,796', 427], ['1,747', 483], ['1,699', 540],
    ['1,651', 599], ['1,603', 660], ['1,555', 723], ['1,507', 787], ['1,459', 854]].forEach(function (t) {
    text(L, 46, t[1], t[0], '', 'end');
});
line(L, '48.500,77 48.500,883', '#909090', 1);
el(L, 'path', { d: 'M12.500 96.500h13v13h-13zM15.500 99.500h8v8h-8zM15.500 102.500h8M18.500 99.500v8M21.500 99.500v8', fill: 'none', stroke: '#333' });
el(L, 'rect', { x: 8.5, y: 185.5, width: 36, height: 28, fill: '#ffdd77', stroke: '#000' });
text(L, 41, 197, '2,003', '', 'end');
text(L, 9, 209, '24,26%', 'red');
rect(L, 10, 359, 34, 13, '#e8200e');
text(L, 41, 370, '1,846', 'white', 'end');
text(L, 40, 382, ',52%', 'hot', 'end');

var R = document.getElementById('rateAxis');
line(R, '1866.500,77 1866.500,883', '#909090', 1);
for (var k = 0; k < 16; k++) {
    var y = 110 + k * 51;
    line(R, '1866,' + y + ' 1873,' + y, '#909090', 1);
    for (var m = 1; m < 5; m++) line(R, '1866,' + (y + m * 10) + ' 1869,' + (y + m * 10), '#909090', 1);
    if (k !== 5) text(R, 1875, y + 4, (100 - k * 5) + ',00');
}
text(R, 1867, 89, 'LC:26,53%', 'hot');
text(R, 1867, 101, 'HC:-11,46%', 'sky');
el(R, 'rect', { x: 1870.5, y: 185.5, width: 41, height: 28, fill: '#ffdd77', stroke: '#000' });
text(R, 1876, 197, '2,003');
text(R, 1871, 209, '-24,26%', 'red');
rect(R, 1871, 359, 40, 13, '#e8200e');
text(R, 1876, 370, '1,846', 'white');
text(R, 1875, 382, '14,52%', 'hot');

/* ---------- lower plot ---------- */
var V = document.getElementById('volumePlot');
stripes(V, 884, 155);
[905, 931, 958, 984, 1010].forEach(function (y) { line(V, '49,' + y + ' 1854,' + y, '#d4d4d4', 1, '4 3'); });

var fast = '50,1028 60,1012 70,1002 82,1017 92,1027 116,1031 150,1029 160,1020 175,1018 189,1007 208,1007 233,1015 250,1018 262,1032 300,1033 310,1017 322,983 339,980 349,975 359,951 378,957 390,948 402,949 422,959 451,958 465,971 485,973 504,960 528,957 582,965 601,956 650,970 664,964 679,964 684,973 693,960 705,950 717,918 726,910 737,919 746,917 751,933 759,942 784,938 820,938 845,948 882,940 931,945 1016,950 1090,961 1176,962 1225,954 1300,957 1371,958 1379,953 1427,957 1438,952 1458,953 1470,950 1513,950 1537,955 1573,957 1600,952 1610,948 1620,938 1636,939 1650,947 1672,943 1697,942 1719,949 1770,953 1778,959 1798,963 1830,965 1855,963';
var slow = '49,1029 60,1020 78,1010 87,1013 102,1028 145,1031 170,1023 194,1010 208,1008 252,1016 271,1028 286,1033 310,1031 322,1007 334,987 359,967 378,955 402,949 427,957 451,958 475,968 490,972 514,962 533,958 582,963 611,958 654,968 679,967 703,960 717,933 727,917 746,915 759,930 784,939 857,944 906,944 980,948 1053,955 1176,961 1237,955 1384,956 1469,953 1513,952 1553,956 1585,956 1608,952 1624,943 1640,939 1652,945 1672,947 1695,943 1715,946 1735,952 1774,955 1802,962 1834,965 1855,963';
var greens = pairs('49,980 51,978 52,895 54,975 60,985 62,958 66,978 80,1012 88,985 100,975 130,980 150,979 155,967 165,985 179,978 181,939 184,978 190,995 197,976 208,990 223,972 240,988 248,980 255,1000 265,976 285,988 305,978 315,950 325,963 330,1000 340,960 345,1010 351,938 356,985 359,1022 365,1000 372,995 380,965 400,998 415,977 458,998 465,980 503,965 510,995 525,982 583,977 605,990 655,975 676,985 679,1025 683,970 687,947 695,970 710,935 720,985 728,1012 740,980 745,965 746,895 748,1030 752,985 762,970 785,992 815,983 820,970 830,990 857,976 868,978 905,985 960,978 990,984 1040,985 1080,979 1090,986 1160,983 1184,990 1225,976 1245,987 1368,983 1371,976 1380,987 1429,979 1443,990 1460,977 1475,984 1520,986 1555,980 1598,980 1602,967 1605,995 1611,970 1615,985 1619,961 1624,980 1628,997 1640,998 1655,977 1680,984 1700,986 1719,979 1735,986 1770,984 1777,992 1781,966 1790,986 1822,984 1825,975 1834,987 1850,980 1853,985 1854,1036');
var fastPts = pairs(fast), slowPts = pairs(slow);
var orange = '', volUp = '', volDown = '', gp = '', wave = '';
for (x = 50; x < 1854; x++) {
    var f = valueAt(fastPts, x), s = valueAt(slowPts, x);
    var lead = f - (s - f) * 0.6;
    orange += 'M' + x + '.5 ' + (Math.min(f, lead) - rnd() * 3).toFixed(0) + 'V' + (Math.max(f, lead) + rnd() * 2 + 1).toFixed(0);
    var gy = valueAt(greens, x);
    gp += x + ',' + (gy + (rnd() - 0.5) * 6).toFixed(0) + ' ';
    if (x % 5 === 0) wave += x + ',' + (983 + (gy - 983) * 0.3).toFixed(0) + ' ';
    var busy = x < 70 || (x > 305 && x < 365) || (x > 672 && x < 765) || (x > 1594 && x < 1628);
    var mild = x < 390 || (x > 455 && x < 465) || (x > 790 && x < 830) || (x > 1770 && x < 1790);
    var h = 1 + Math.pow(rnd(), 6) * (busy ? 30 : mild ? 16 : 8) + (busy ? rnd() * 9 : rnd() * 2);
    volUp += 'M' + x + '.5 1037v' + (-h).toFixed(0);
    volDown += 'M' + x + '.5 1037v' + (-h * rnd() * 0.7).toFixed(0);
}
volUp += 'M52.500 1037V935M53.500 1037V978M458.500 1037v-25M684.500 1037v-48M745.500 1037v-60M1854.500 1037V1008';
line(V, wave, '#ccffff', 4);
el(V, 'path', { d: orange, stroke: '#ff9900', fill: 'none' });
line(V, slow, '#993300', 4);
el(V, 'path', { d: volUp, stroke: '#e8200e', fill: 'none' });
el(V, 'path', { d: volDown, stroke: '#1259c3', fill: 'none' });
line(V, gp, '#008c33', 2, '7 1');
line(V, fast, '#0000ff', 2);
line(V, '1382.500,884 1382.500,1034', '#ff0000', 1);

var VL = document.getElementById('volumeAxis');
line(VL, '48.500,884 48.500,1039', '#909090', 1);
['3,750K', '3,500K', '3,250K', '3,000K', '2,750K', '2,500K', '2,250K', '2,000K'].forEach(function (t, i) {
    text(VL, 42, 900 + i * 19, t, '', 'end');
    line(VL, '43,' + (897 + i * 19) + ' 48,' + (897 + i * 19), '#909090', 1);
});
var VR = document.getElementById('amountAxis');
line(VR, '1866.500,884 1866.500,1039', '#909090', 1);
['500,000', '400,000', '300,000', '200,000', '100,000'].forEach(function (t, i) {
    text(VR, 1874, 908 + i * 26, t);
    line(VR, '1866,' + (905 + i * 26) + ' 1873,' + (905 + i * 26), '#909090', 1);
});
rect(VR, 1903, 886, 8, 7, '#444');
el(VR, 'path', { d: 'M1905 888l4 4M1909 888l-4 4', stroke: '#fff' });

/* ---------- time axis ---------- */
var T = document.getElementById('timeAxis');
line(T, '48.500,1040 48.500,1057', '#909090', 1);
line(T, '1866.500,1040 1866.500,1057', '#909090', 1);
text(T, 50, 1051, '04/03', 'bold');
ticks.forEach(function (x, i) {
    line(T, (x + 0.5) + ',1040 ' + (x + 0.5) + ',1057', '#909090', 1);
    text(T, x + 2, 1051, tickLabels[i]);
});
text(T, 1875, 1051, '15:30:00');
el(T, 'rect', { x: 1314.5, y: 1040.5, width: 135, height: 15, fill: '#ffdd77', stroke: '#000' });
text(T, 1317, 1052, '2025/04/04(금) 13:41:45');
```
